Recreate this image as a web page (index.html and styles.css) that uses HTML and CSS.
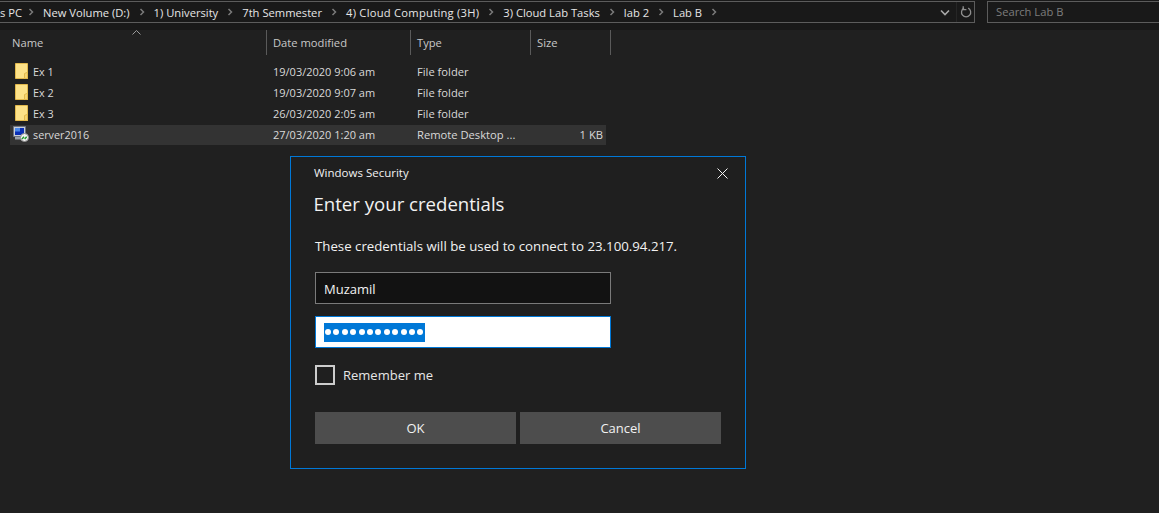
FILE: index.html
```html
<!DOCTYPE html>
<html lang="en">
<head>
  <meta charset="UTF-8" />
  <title>Lab B</title>
  <link rel="stylesheet" href="styles.css">
</head>
<body>
  <div class="toolbar">
    <div class="address">
      <div class="crumbs">
        <span class="cut">s PC</span><svg class="sep" viewBox="0 0 6 8"><path d="M1.5 1l3 3-3 3"/></svg>
        <span>New Volume (D:)</span><svg class="sep" viewBox="0 0 6 8"><path d="M1.5 1l3 3-3 3"/></svg>
        <span>1) University</span><svg class="sep" viewBox="0 0 6 8"><path d="M1.5 1l3 3-3 3"/></svg>
        <span>7th Semmester</span><svg class="sep" viewBox="0 0 6 8"><path d="M1.5 1l3 3-3 3"/></svg>
        <span class="wide">4) Cloud Computing (3H)</span><svg class="sep" viewBox="0 0 6 8"><path d="M1.5 1l3 3-3 3"/></svg>
        <span>3) Cloud Lab Tasks</span><svg class="sep" viewBox="0 0 6 8"><path d="M1.5 1l3 3-3 3"/></svg>
        <span>lab 2</span><svg class="sep" viewBox="0 0 6 8"><path d="M1.5 1l3 3-3 3"/></svg>
        <span>Lab B</span><svg class="sep" viewBox="0 0 6 8"><path d="M1.5 1l3 3-3 3"/></svg>
      </div>
      <svg class="chevron" viewBox="0 0 10 7"><path d="M1 1.5l4 4 4-4"/></svg>
      <div class="refresh">
        <svg viewBox="0 0 12 12"><path d="M4 2.2A4.6 4.6 0 1 0 8.2 2.2"/><path d="M3.2 0.2v3.4h3.2"/></svg>
      </div>
    </div>
    <div class="search">Search Lab B</div>
  </div>

  <div class="header">
    <div class="col-name head-cell">Name<svg class="sort" viewBox="0 0 9 5"><path d="M.5 4.5l4-4 4 4"/></svg></div>
    <div class="col-date head-cell">Date modified</div>
    <div class="col-type head-cell">Type</div>
    <div class="col-size head-cell">Size</div>
  </div>

  <div class="files">
    <div class="row">
      <div class="col-name"><svg class="icon" viewBox="0 0 14 16"><path class="fold" d="M.5.5h12v15H.5z"/><path class="flap" d="M9.5 15.500v-5l3-1.200v6.200z"/></svg>Ex 1</div>
      <div class="col-date">19/03/2020 9:06 am</div>
      <div class="col-type">File folder</div>
      <div class="col-size"></div>
    </div>
    <div class="row">
      <div class="col-name"><svg class="icon" viewBox="0 0 14 16"><path class="fold" d="M.5.5h12v15H.5z"/><path class="flap" d="M9.5 15.500v-5l3-1.200v6.200z"/></svg>Ex 2</div>
      <div class="col-date">19/03/2020 9:07 am</div>
      <div class="col-type">File folder</div>
      <div class="col-size"></div>
    </div>
    <div class="row">
      <div class="col-name"><svg class="icon" viewBox="0 0 14 16"><path class="fold" d="M.5.5h12v15H.5z"/><path class="flap" d="M9.5 15.500v-5l3-1.200v6.200z"/></svg>Ex 3</div>
      <div class="col-date">26/03/2020 2:05 am</div>
      <div class="col-type">File folder</div>
      <div class="col-size"></div>
    </div>
    <div class="row selected">
      <div class="col-name">
        <svg class="icon rdp" viewBox="0 0 16 16">
          <path d="M.5.5h12v10H.5z" fill="#c9ced6" stroke="#6d7380"/>
          <path d="M2 2h9v7H2z" fill="#0a2fb5"/>
          <path d="M2 2h5v3.500H2z" fill="#4a88ea"/>
          <path d="M2 11h8v2.500H2z" fill="#9aa0aa"/>
          <circle cx="11.500" cy="11.500" r="4" fill="#f2f2f2" stroke="#8c8c8c"/>
          <path d="M9 13l2-2.300M11.700 13l2-2.300" stroke="#1f9a2c" stroke-width="1.400" fill="none"/>
        </svg>server2016
      </div>
      <div class="col-date">27/03/2020 1:20 am</div>
      <div class="col-type">Remote Desktop ...</div>
      <div class="col-size">1 KB</div>
    </div>
  </div>

  <div class="dialog">
    <div class="dialog-top">
      <span>Windows Security</span>
      <svg class="close" viewBox="0 0 11 11"><path d="M.5.5l10 10M10.500.5l-10 10"/></svg>
    </div>
    <h1>Enter your credentials</h1>
    <p>These credentials will be used to connect to 23.100.94.217.</p>
    <div class="field">Muzamil</div>
    <div class="field password"><span class="dots"><i></i><i></i><i></i><i></i><i></i><i></i><i></i><i></i><i></i><i></i><i></i><i></i></span></div>
    <div class="remember"><span class="check"></span>Remember me</div>
    <div class="buttons">
      <div class="btn">OK</div>
      <div class="btn">Cancel</div>
    </div>
  </div>
</body>
</html>
```
FILE: styles.css
```css
html, body {
  height: 100%;
}
body {
  margin: 0;
  background: #202020;
  color: #d9d9d9;
  font-family: "Open Sans", "Noto Sans", sans-serif;
  font-size: 11.2px;
  overflow: hidden;
  position: relative;
}
.toolbar {
  display: flex;
  height: 30px;
  padding-top: 1px;
  box-sizing: border-box;
  background: #191919;
}
.address {
  width: 975px;
  height: 22px;
  box-sizing: border-box;
  border: 1px solid #5c5c5c;
  border-left: none;
  display: flex;
  align-items: center;
  overflow: hidden;
}
.crumbs {
  flex: 1;
  display: flex;
  align-items: center;
  color: #e6e6e6;
  white-space: nowrap;
}
.cut {
  margin-right: -3px;
}
.wide {
  letter-spacing: 0.25px;
}
.sep {
  width: 6px;
  height: 8px;
  margin: 0 9px;
  flex: none;
}
.sep path {
  fill: none;
  stroke: #7a7a7a;
  stroke-width: 1.5;
}
.chevron {
  width: 10px;
  height: 7px;
  margin-right: 6px;
}
.chevron path {
  fill: none;
  stroke: #a8a8a8;
  stroke-width: 1.6;
}
.refresh {
  width: 17px;
  height: 20px;
  border-left: 1px solid #262626;
  display: flex;
  align-items: center;
  justify-content: center;
}
.refresh svg {
  width: 12px;
  height: 12px;
}
.refresh path {
  fill: none;
  stroke: #8f8f8f;
  stroke-width: 1.3;
}
.search {
  width: 172px;
  height: 22px;
  box-sizing: border-box;
  margin-left: 12px;
  border: 1px solid #5c5c5c;
  border-right: none;
  padding-left: 8px;
  line-height: 20px;
  color: #7d7d7d;
}
.header {
  display: flex;
  height: 25px;
  color: #c8c8c8;
}
.head-cell {
  height: 25px;
  line-height: 25px;
  box-sizing: border-box;
  border-right: 1px solid #5a5a5a;
  position: relative;
}
.col-name {
  width: 257px;
  flex: none;
  display: flex;
  align-items: center;
  box-sizing: border-box;
}
.col-date {
  width: 144px;
  flex: none;
  padding-left: 6px;
  box-sizing: border-box;
}
.col-type {
  width: 120px;
  flex: none;
  padding-left: 6px;
  box-sizing: border-box;
}
.col-size {
  width: 75px;
  flex: none;
  padding: 0 3px 0 6px;
  box-sizing: border-box;
}
.header .col-name {
  width: 267px;
  padding-left: 12px;
}
.header .col-size {
  width: 80px;
}
.sort {
  position: absolute;
  left: 132px;
  top: 0;
  width: 9px;
  height: 5px;
}
.sort path {
  fill: none;
  stroke: #9a9a9a;
}
.files {
  padding: 7px 0 0 10px;
}
.row {
  display: flex;
  align-items: center;
  width: 596px;
  height: 20px;
  margin-bottom: 1px;
  line-height: 18px;
}
.row .col-name {
  padding-left: 5px;
  font-size: 10.8px;
}
.row .col-date {
  font-size: 11px;
}
.row .col-size {
  text-align: right;
}
.selected {
  background: #333333;
}
.icon {
  width: 14px;
  height: 16px;
  margin-right: 4px;
  flex: none;
  align-self: flex-start;
}
.rdp {
  width: 16px;
  margin-left: -2px;
}
.fold {
  fill: #fde288;
  stroke: #e2b94c;
}
.flap {
  fill: #f6d571;
  stroke: #e2b94c;
}
.dialog {
  position: absolute;
  left: 290px;
  top: 156px;
  width: 456px;
  height: 313px;
  box-sizing: border-box;
  border: 1px solid #0078d7;
  background: #1f1f1f;
  padding: 0 24px;
  color: #f2f2f2;
}
.dialog-top {
  display: flex;
  justify-content: space-between;
  align-items: center;
  height: 32px;
  margin: 0 -7px 0 -1px;
  font-size: 11.5px;
}
.dialog-top span {
  padding-bottom: 2px;
}
.close {
  width: 11px;
  height: 11px;
}
.close path {
  fill: none;
  stroke: #f2f2f2;
}
h1 {
  margin: 0 0 0 -1.5px;
  font-size: 18.6px;
  font-weight: 400;
  line-height: 29px;
}
p {
  margin: 19px 0 0;
  font-size: 13.25px;
  line-height: 18px;
}
.field {
  width: 296px;
  height: 32px;
  margin-top: 17px;
  box-sizing: border-box;
  border: 1px solid #7a7a7a;
  background: #121212;
  padding-left: 8px;
  line-height: 32px;
  font-size: 13px;
}
.password {
  margin-top: 12px;
  border-color: #0078d7;
  background: #ffffff;
  display: flex;
  align-items: center;
}
.dots {
  display: flex;
  align-items: center;
  gap: 2.4px;
  height: 19px;
  padding: 0 2px 0 1px;
  background: #0078d7;
}
.dots i {
  display: block;
  width: 6px;
  height: 6px;
  border-radius: 50%;
  background: #ffffff;
}
.remember {
  display: flex;
  align-items: center;
  margin-top: 17px;
  font-size: 13px;
  color: #e6e6e6;
}
.check {
  width: 20px;
  height: 20px;
  box-sizing: border-box;
  border: 2px solid #cccccc;
  margin-right: 8px;
}
.buttons {
  display: flex;
  gap: 4px;
  margin-top: 27px;
}
.btn {
  width: 201px;
  height: 32px;
  background: #4d4d4d;
  text-align: center;
  line-height: 32px;
  font-size: 13px;
  color: #f2f2f2;
}
```
